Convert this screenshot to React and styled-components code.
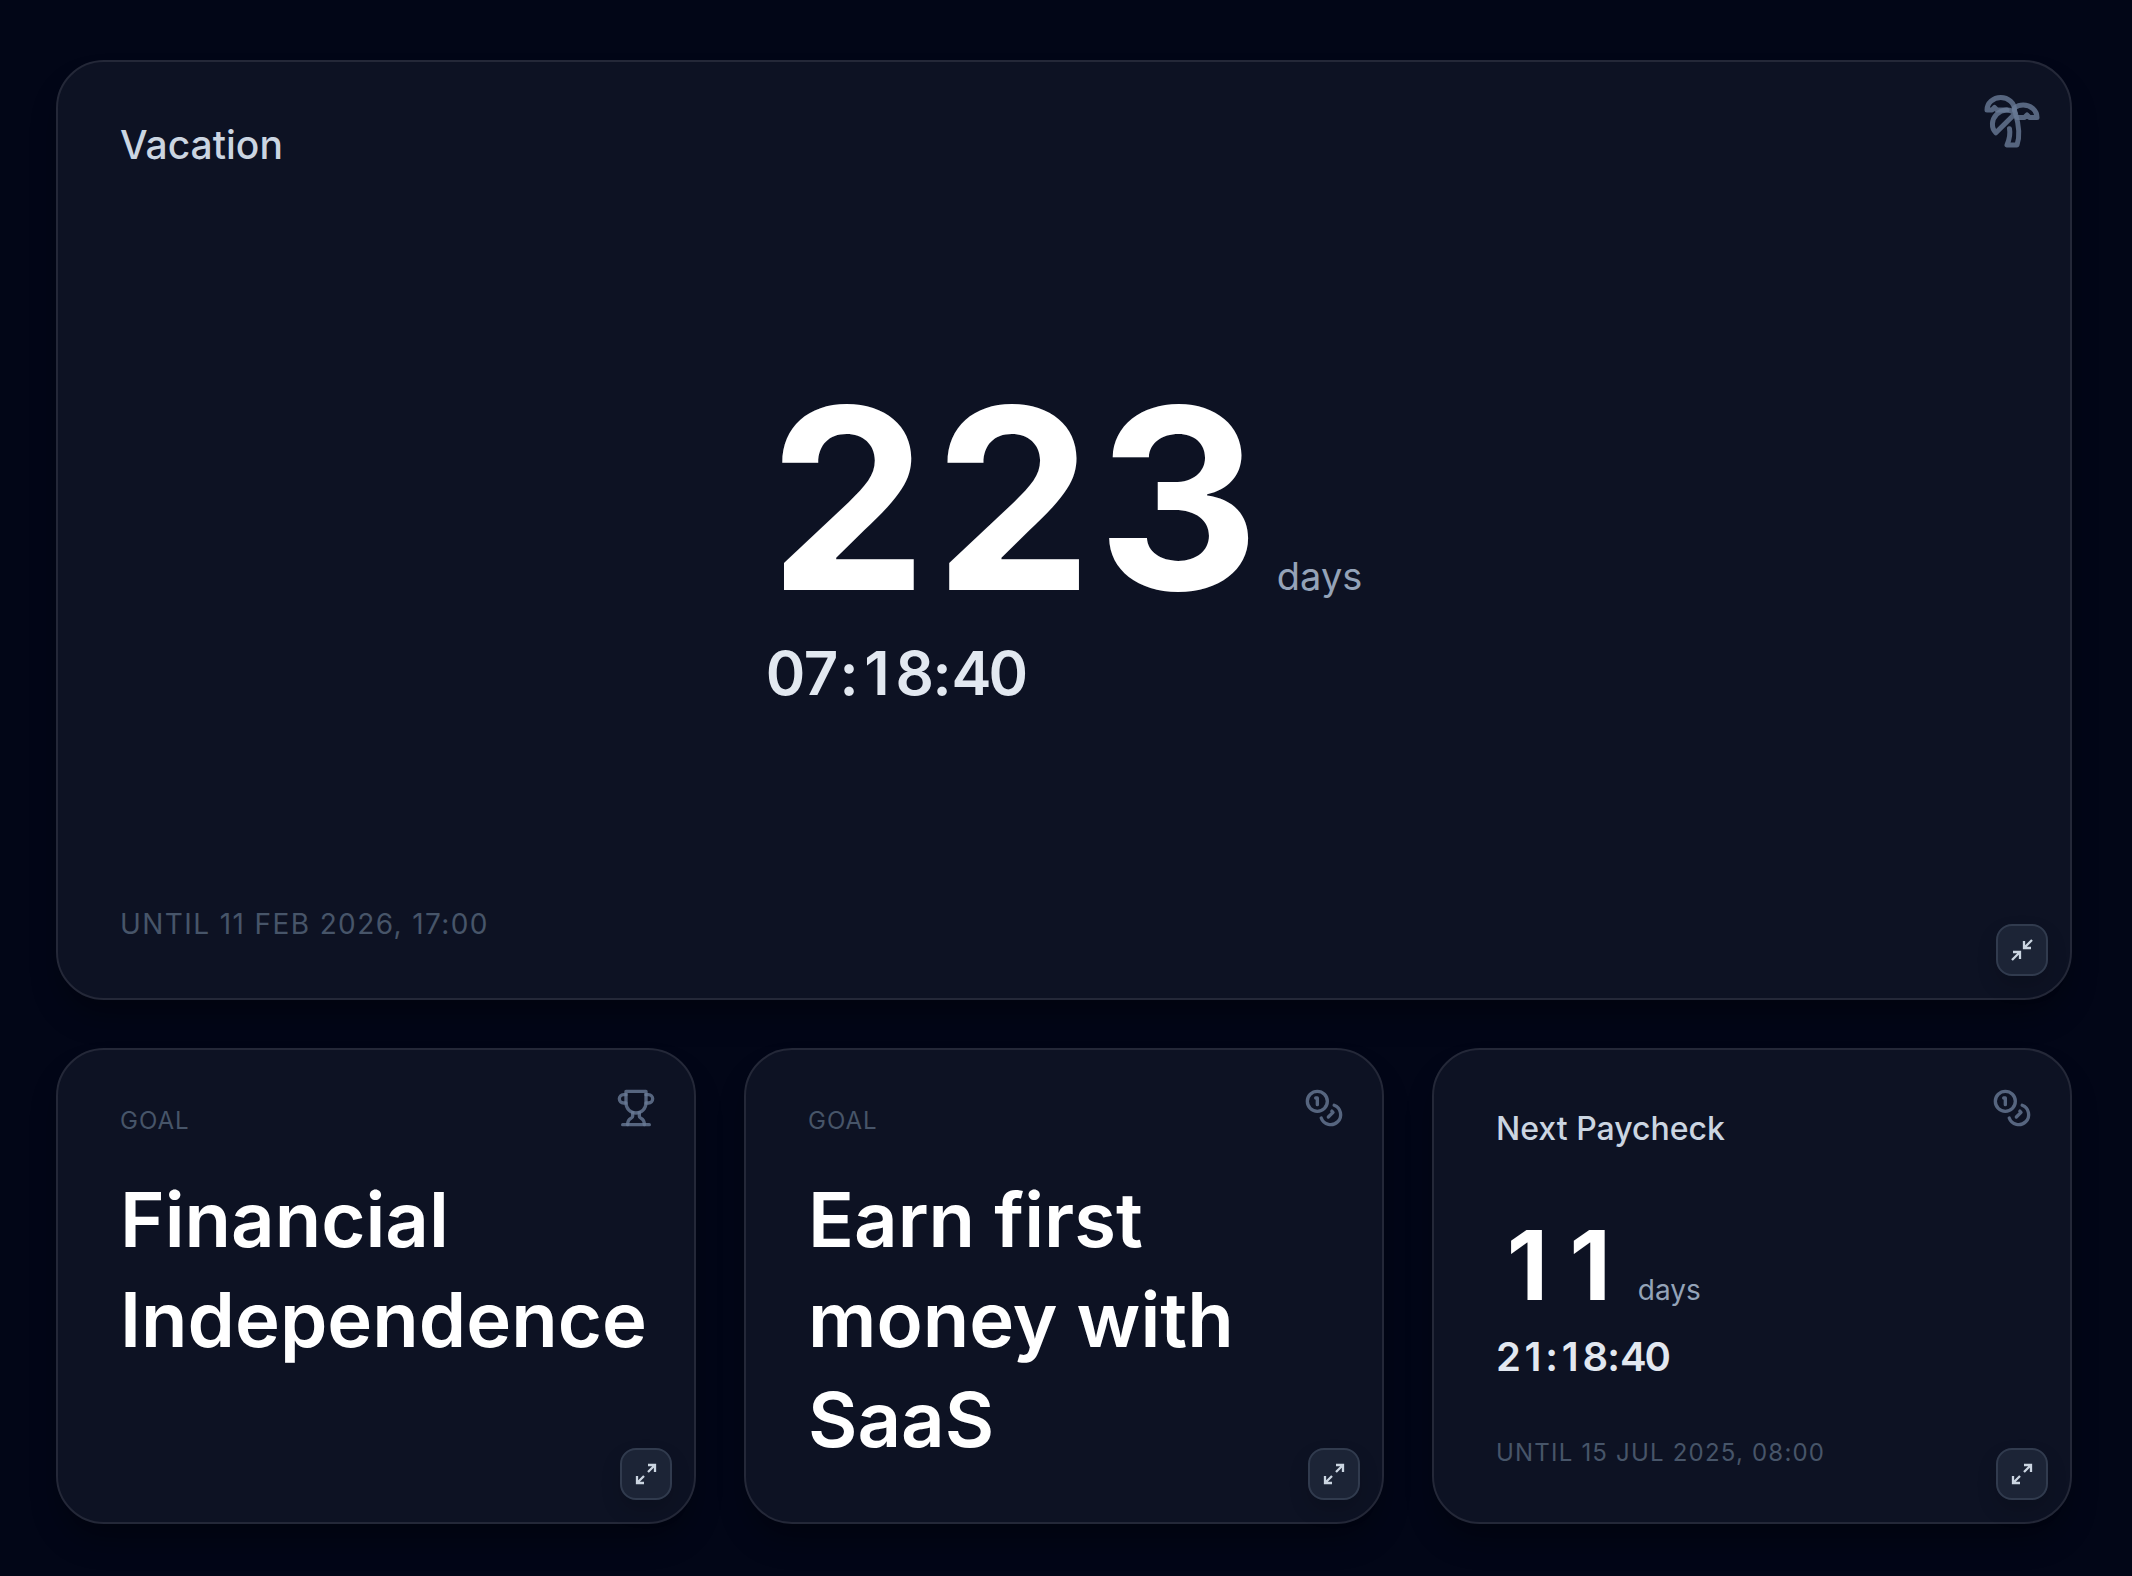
import React, { useState } from 'react'
import styled, { createGlobalStyle } from 'styled-components'

const cards = [
    { id: 'vacation', type: 'countdown', icon: 'palm', title: 'Vacation', days: '223', time: '07:18:40', until: 'Until 11 Feb 2026, 17:00' },
    { id: 'independence', type: 'goal', icon: 'trophy', title: 'Financial Independence' },
    { id: 'saas', type: 'goal', icon: 'coins', title: 'Earn first money with SaaS' },
    { id: 'paycheck', type: 'countdown', icon: 'coins', title: 'Next Paycheck', days: '11', time: '21:18:40', until: 'Until 15 Jul 2025, 08:00' },
]

const PalmIcon = () => (
    <>
        <path d="M13 8c0-2.76-2.46-5-5.5-5S2 5.24 2 8h2l1-1 1 1h4" />
        <path d="M13 7.14A5.82 5.82 0 0 1 16.5 6c3.04 0 5.5 2.24 5.5 5h-3l-1-1-1 1h-3" />
        <path d="M5.89 9.71c-2.15 2.15-2.3 5.47-.35 7.43l4.24-4.25.7-.7.71-.71 2.12-2.12c-1.95-1.96-5.27-1.8-7.42.35" />
        <path d="M11 15.5c.5 2.5-.17 4.5-1 6.5h4c2-5.5-.5-12-1-14" />
    </>
)

const TrophyIcon = () => (
    <>
        <path d="M6 9H4.5a2.5 2.5 0 0 1 0-5H6" />
        <path d="M18 9h1.5a2.5 2.5 0 0 0 0-5H18" />
        <path d="M4 22h16" />
        <path d="M10 14.66V17c0 .55-.47.98-.97 1.21C7.85 18.75 7 20.24 7 22" />
        <path d="M14 14.66V17c0 .55.47.98.97 1.21C16.15 18.75 17 20.24 17 22" />
        <path d="M18 2H6v7a6 6 0 0 0 12 0V2Z" />
    </>
)

const CoinsIcon = () => (
    <>
        <circle cx="8" cy="8" r="6" />
        <path d="M18.09 10.37A6 6 0 1 1 10.34 18" />
        <path d="M7 6h1v4" />
        <path d="m16.71 13.88.7.71-2.82 2.82" />
    </>
)

const icons = { palm: PalmIcon, trophy: TrophyIcon, coins: CoinsIcon }

const Digits = ({ value, bold }) =>
    value.split('').map((char, key) => (char === ':' ? char : <Digit key={key} $bold={bold}>{char}</Digit>))

const App = () => {
    const [expanded, setExpanded] = useState('vacation')

    return (
        <Board>
            <GlobalStyle />
            {cards.map((card) => {
                const big = card.id === expanded
                const Icon = icons[card.icon]
                return (
                    <Card key={card.id} $big={big}>
                        <CardIcon $big={big} viewBox="0 0 24 24" aria-hidden="true">
                            <Icon />
                        </CardIcon>
                        {card.type === 'goal' ? (
                            <>
                                <Label>Goal</Label>
                                <GoalTitle>{card.title}</GoalTitle>
                            </>
                        ) : (
                            <>
                                <Title $big={big}>{card.title}</Title>
                                <Counter $big={big}>
                                    <DaysRow>
                                        <DaysNumber $big={big}><Digits value={card.days} bold /></DaysNumber>
                                        <DaysUnit $big={big}>days</DaysUnit>
                                    </DaysRow>
                                    <Time $big={big}><Digits value={card.time} /></Time>
                                </Counter>
                                <Until $big={big}>{card.until}</Until>
                            </>
                        )}
                        <ResizeButton
                            type="button"
                            aria-label={big ? 'Collapse card' : 'Expand card'}
                            onClick={() => setExpanded(big ? null : card.id)}
                        >
                            <ResizeIcon viewBox="0 0 24 24" aria-hidden="true">
                                {big ? (
                                    <path d="M22 2 14 10M14 3v7h7M2 22l8-8M3 14h7v7" />
                                ) : (
                                    <path d="M14 10l7-7M14 3h7v7M10 14l-7 7M3 14v7h7" />
                                )}
                            </ResizeIcon>
                        </ResizeButton>
                    </Card>
                )
            })}
        </Board>
    )
}

export default App

const GlobalStyle = createGlobalStyle`
    * {
        box-sizing: border-box;
        margin: 0;
    }

    body {
        min-height: 100vh;
        background: #020617;
        color: #ffffff;
        font-family: Inter, "Liberation Sans", sans-serif;
        -webkit-font-smoothing: antialiased;
    }
`

const Board = styled.main`
    display: grid;
    grid-template-columns: repeat(3, minmax(0, 1fr));
    gap: 48px;
    padding: 60px 60px 52px 56px;
`

const Card = styled.article`
    position: relative;
    display: flex;
    flex-direction: column;
    grid-column: ${({ $big }) => ($big ? '1 / -1' : 'auto')};
    min-height: ${({ $big }) => ($big ? '940px' : '476px')};
    padding: 55px 62px 53px;
    background: #0d1223;
    border: 2px solid #242838;
    border-radius: 48px;
    box-shadow: 0 20px 30px -6px rgba(0, 0, 0, 0.35);
`

const CardIcon = styled.svg`
    position: absolute;
    top: ${({ $big }) => ($big ? '28px' : '38px')};
    right: ${({ $big }) => ($big ? '28px' : '38px')};
    width: ${({ $big }) => ($big ? '60px' : '40px')};
    height: ${({ $big }) => ($big ? '60px' : '40px')};
    fill: none;
    stroke: rgba(105, 122, 150, 0.8);
    stroke-width: 2;
    stroke-linecap: round;
    stroke-linejoin: round;
`

const Label = styled.p`
    color: #475569;
    font-size: 24px;
    line-height: 32px;
    letter-spacing: 1px;
    text-transform: uppercase;
`

const GoalTitle = styled.h2`
    margin-top: 32px;
    font-size: 76px;
    font-weight: 600;
    line-height: 100px;
`

const Title = styled.h2`
    color: #cbd5e1;
    font-size: ${({ $big }) => ($big ? '39px' : '32px')};
    font-weight: 500;
    line-height: ${({ $big }) => ($big ? '56px' : '48px')};
`

const Counter = styled.div`
    display: flex;
    flex: 1;
    flex-direction: column;
    justify-content: center;
    align-self: ${({ $big }) => ($big ? 'center' : 'flex-start')};
    padding-top: ${({ $big }) => ($big ? '6px' : '12px')};
`

const DaysRow = styled.div`
    display: flex;
    align-items: baseline;
    gap: 16px;
`

const Digit = styled.span`
    display: inline-block;
    width: ${({ $bold }) => ($bold ? '0.655em' : '0.615em')};
    text-align: center;
`

const DaysNumber = styled.span`
    font-size: ${({ $big }) => ($big ? '252px' : '96px')};
    font-weight: 700;
    line-height: 1;
`

const DaysUnit = styled.span`
    color: #94a3b8;
    font-size: ${({ $big }) => ($big ? '38px' : '28px')};
`

const Time = styled.p`
    margin-top: ${({ $big }) => ($big ? '12px' : '16px')};
    color: #e2e8f0;
    font-size: ${({ $big }) => ($big ? '60px' : '40px')};
    font-weight: 600;
    line-height: ${({ $big }) => ($big ? '72px' : '56px')};
`

const Until = styled.p`
    color: #475569;
    font-size: ${({ $big }) => ($big ? '28px' : '24px')};
    line-height: ${({ $big }) => ($big ? '42px' : '32px')};
    letter-spacing: 0.05em;
    text-transform: uppercase;
`

const ResizeButton = styled.button`
    position: absolute;
    right: 22px;
    bottom: 22px;
    display: flex;
    align-items: center;
    justify-content: center;
    width: 52px;
    height: 52px;
    padding: 0;
    color: #cbd5e1;
    background: #1c2436;
    border: 2px solid #313b4e;
    border-radius: 16px;
    box-shadow: 0 10px 20px rgba(0, 0, 0, 0.15);
    cursor: pointer;
`

const ResizeIcon = styled.svg`
    width: 24px;
    height: 24px;
    fill: none;
    stroke: currentColor;
    stroke-width: 2.3;
`
